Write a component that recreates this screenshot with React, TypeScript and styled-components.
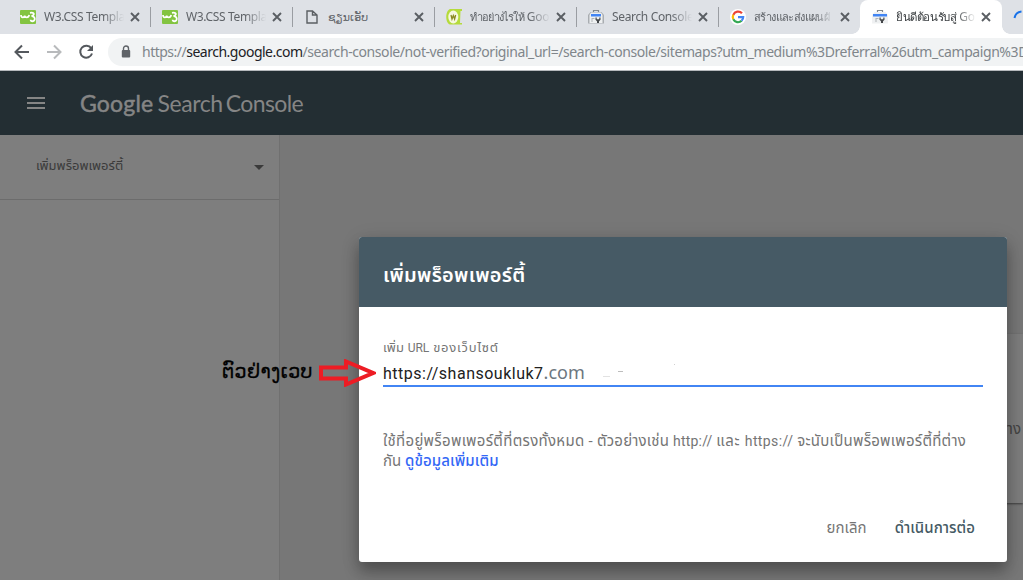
import React from 'react';
import styled, { createGlobalStyle } from 'styled-components';

const Global = createGlobalStyle`
  * { box-sizing: border-box; }
  body { margin: 0; overflow: hidden; font-family: Roboto, "Noto Sans Thai", "Noto Sans", "DejaVu Sans", sans-serif; }
`;

const Page = styled.div`width: 1023px; height: 580px; overflow: hidden; position: relative; background: #777;`;

const TabStrip = styled.div`
  display: flex; height: 34px; background: #dee1e6; overflow: hidden; padding-left: 9px;
`;
const TabBox = styled.div<{ $active?: boolean; $rule?: boolean }>`
  position: relative; flex: none; width: 142px; height: 34px; margin-left: ${p => (p.$active ? -1 : 0)}px;
  display: flex; align-items: center; padding: 0 11px 0 ${p => (p.$active ? 12 : 11)}px;
  background: ${p => (p.$active ? '#fff' : 'transparent')};
  border-radius: ${p => (p.$active ? '8px 8px 0 0' : '0')};
  &::after {
    content: ''; display: ${p => (p.$rule ? 'block' : 'none')};
    position: absolute; right: 0; top: 7px; width: 1px; height: 20px; background: #9a9da2;
  }
`;
const Foot = styled.i<{ $side: 'left' | 'right' }>`
  position: absolute; bottom: 0; ${p => p.$side}: -8px; width: 8px; height: 8px;
  background: radial-gradient(circle at ${p => (p.$side === 'left' ? '0 0' : '100% 0')}, transparent 7.5px, #fff 8px);
`;
const Favicon = styled.span`flex: none; width: 16px; height: 16px; display: flex; align-items: center; justify-content: center;`;
const TabTitle = styled.span<{ $size: number; $ls: number; $dark?: boolean; $cut?: boolean }>`
  width: 80px; flex: none; margin-left: 8px; overflow: hidden; white-space: nowrap; line-height: 22px;
  font-family: "Noto Sans", "Open Sans", "DejaVu Sans", sans-serif;
  font-size: ${p => p.$size}px; letter-spacing: ${p => p.$ls}px; color: ${p => (p.$dark ? '#3c4043' : '#5f6368')};
  mask-image: ${p => (p.$cut ? 'linear-gradient(90deg, #000 74%, transparent 100%)' : 'none')};
`;
const CloseIcon = styled.svg`flex: none; width: 10px; height: 10px; margin-left: auto;`;

const Toolbar = styled.div`
  display: flex; align-items: center; height: 37px; background: #fff; border-bottom: 1px solid #b5b9bc; padding-left: 12px; overflow: hidden;
`;
const NavIcon = styled.svg`flex: none; width: 20px; height: 20px; margin-right: 12px;`;
const Omnibox = styled.div`
  display: flex; align-items: center; flex: none; width: 960px; height: 28px; border-radius: 14px; background: #f1f3f4;
  padding-left: 13px;
`;
const Lock = styled.svg`flex: none; width: 10px; height: 14px;`;
const Url = styled.span`
  margin-left: 11px; white-space: nowrap; font: 14px/22px "Noto Sans", "Open Sans", sans-serif; color: #80868b; letter-spacing: -0.42px;
`;
const Origin = styled.span`
  letter-spacing: -0.5px;
  b { font-weight: 400; color: #202124; }
`;

const AppBar = styled.header`
  display: flex; align-items: center; height: 64px; background: #232e33; padding-left: 27px;
`;
const Brand = styled.div`
  margin-left: 35px; display: flex; font: 23px/30px Lato, sans-serif; color: #858585; white-space: nowrap;
`;
const BrandWord = styled.span<{ $bold?: boolean; $ls: number; $gap?: number }>`
  -webkit-text-stroke: ${p => (p.$bold ? 0.5 : 0)}px #858585; letter-spacing: ${p => p.$ls}px; margin-left: ${p => p.$gap ?? 0}px;
`;

const Body = styled.div`display: flex; height: 445px;`;
const Sidebar = styled.aside`width: 280px; background: #7e7e7e; border-right: 1px solid #707070;`;
const PropertyPicker = styled.div`
  display: flex; justify-content: space-between; align-items: center; height: 65px; border-bottom: 1px solid #6c6c6c; padding: 0 15px 3px 36px;
  color: #3b3b3b;
`;
const Caret = styled.svg`width: 10px; height: 5px; margin-top: 4px;`;
const Main = styled.main`flex: 1; display: flex; justify-content: flex-end; padding-top: 199px; background: #777;`;
const Card = styled.section`
  display: flex; justify-content: flex-end; width: 30px; height: 169px; background: #7d7d7d; box-shadow: 0 1px 2px rgba(0,0,0,.5);
  padding: 85px 2px 0 0; line-height: 20px; color: #444;
`;

const Dialog = styled.section`
  position: absolute; left: 359px; top: 237px; width: 648px; height: 325px; border-radius: 3px; background: #fff;
  display: flex; flex-direction: column;
  box-shadow: 0 10px 15px rgba(0,0,0,.28), 0 3px 20px rgba(0,0,0,.12);
`;
const DialogHead = styled.h2`
  margin: 0; height: 70px; padding: 4px 24px 0; border-radius: 3px 3px 0 0; background: #465a65; color: #fff; line-height: 66px; font-weight: 600;
`;
const DialogBody = styled.div`flex: 1; display: flex; flex-direction: column; padding: 32px 24px 0;`;
const T = styled.span<{ $size?: number; $ls?: number }>`
  font-size: ${p => p.$size ?? 14}px; letter-spacing: ${p => p.$ls ?? 0}px; white-space: pre;
`;
const Label = styled.label`display: flex; align-items: baseline; height: 18px; line-height: 18px; color: #757575;`;
const Field = styled.div`
  position: relative; display: flex; height: 30px; border-bottom: 2px solid #4285f4; line-height: 33px; color: #212121; margin-bottom: 44px;
`;
const Suffix = styled.span`font: 18px/30px "Noto Sans", "Open Sans", sans-serif; color: #6d7780;`;
const Smudges = styled.svg`position: absolute; left: 219px; top: 3px; width: 76px; height: 18px;`;
const Help = styled.p`
  margin: 0; color: #757575;
`;
const HelpLine = styled.span`display: flex; align-items: baseline; height: 20px; line-height: 20px;`;
const MoreLink = styled.a`color: #3367f6; font-weight: 500;`;
const Actions = styled.div`
  display: flex; justify-content: flex-end; gap: 28px; margin-top: 47px; padding-right: 8px; line-height: 20px; color: #757575;
`;
const Confirm = styled.span`color: #455a64; font-weight: 500;`;

const Note = styled.div`
  position: absolute; left: 222px; top: 355px; display: flex; align-items: center; height: 32px; color: #000; font: 19px/30px "DejaVu Sans", sans-serif;
  letter-spacing: .4px; -webkit-text-stroke: .3px #000; white-space: nowrap;
`;
const Arrow = styled.svg`position: absolute; left: 319px; top: 359px; width: 57px; height: 28px;`;

const Close = () => (
  <CloseIcon viewBox="0 0 10 10"><path d="M1 1l8 8M9 1L1 9" stroke="#5a5e63" strokeWidth="1.9" /></CloseIcon>
);
const W3 = () => (
  <svg width="16" height="14" viewBox="0 0 16 14">
    <rect width="16" height="14" rx="1" fill="#83c441" />
    <path d="M1 5c0 3.200 3.500 3 3.700.5C5 8 8.500 8.200 9.200 5" fill="none" stroke="#fff" strokeWidth="1.700" />
    <path d="M10 2.800c4.500-1 5 2 1.600 3.400 4.500.2 3.900 5.600 0 5-.8-.2-1-.8-1-1.400" fill="none" stroke="#fff" strokeWidth="1.800" />
  </svg>
);
const Doc = () => (
  <svg width="12" height="14" viewBox="0 0 12 14"><path d="M1 1h5.500L11 5v8H1zM6.500 1v4H11" fill="none" stroke="#5b5f63" strokeWidth="1.400" /></svg>
);
const Wiki = () => (
  <svg width="16" height="16" viewBox="0 0 16 16">
    <path d="M4 0h12v2h-1.500l-.5 12H16v1.500H4C-1 14-1 2 4 0z" fill="#b5db3b" />
    <ellipse cx="7.300" cy="8" rx="5" ry="6.500" fill="#f6f8de" />
    <path d="M5 6l1 4 1.300-3.500L8.600 10l1-4" fill="none" stroke="#8a8a20" strokeWidth="1.300" />
  </svg>
);
const Toolbox = ({ light }: { light?: boolean }) => (
  <svg width="16" height="16" viewBox="0 0 16 16">
    <path d="M5.500 3V1.500h5V3" fill="none" stroke="#80868b" strokeWidth="1.200" />
    <path d="M2.500 3h11L16 6v8.500H0V6z" fill={light ? '#f0f1f2' : '#a9adb1'} />
    <path d="M3 3.500h10L14.500 6v8h-13V6z" fill="#eef0f1" />
    <rect x={light ? 1 : 3} y="5" width={light ? 14 : 10} height="2.500" fill="#4285f4" />
    <path d="M3.500 9h3v1H4.500v3h-1z" fill="#b0b4b8" />
    <path d="M7.500 8.500v2.300l1.500 1.400V14h2v-1.800l1.500-1.400V8.500h-1.200v1.800H8.700V8.500z" fill="#44474a" />
  </svg>
);
const Google = () => (
  <svg width="16" height="16" viewBox="0 0 16 16">
    <circle cx="8" cy="8" r="8" fill="#fff" />
    <g fill="none" strokeWidth="2.200">
      <path d="M12 4.300A5.200 5.200 0 0 0 3.300 5.800" stroke="#ea4335" />
      <path d="M3.300 5.800a5.200 5.200 0 0 0 0 4.500" stroke="#fbbc05" />
      <path d="M3.300 10.300a5.200 5.200 0 0 0 8.300 1.500" stroke="#34a853" />
      <path d="M11.600 11.800A5 5 0 0 0 13.200 8.100H8" stroke="#4285f4" />
    </g>
  </svg>
);

type TabProps = {
  icon: React.ReactNode; children: React.ReactNode; size?: number; ls?: number; active?: boolean; cut?: boolean; rule?: boolean;
};
const Tab = ({ icon, children, size = 12, ls = -0.25, active, cut, rule = true }: TabProps) => (
  <TabBox $active={active} $rule={rule}>
    {active && <><Foot $side="left" /><Foot $side="right" /></>}
    <Favicon>{icon}</Favicon>
    <TabTitle $size={size} $ls={ls} $dark={active} $cut={cut}>{children}</TabTitle>
    <Close />
  </TabBox>
);

export default function App() {
  return (
    <Page>
      <Global />
      <TabStrip>
        <Tab icon={<W3 />} cut ls={-0.35}>W3.CSS Templa</Tab>
        <Tab icon={<W3 />} cut ls={-0.35}>W3.CSS Templa</Tab>
        <Tab icon={<Doc />} size={11} ls={0}>ຊຽນເອັບ</Tab>
        <Tab icon={<Wiki />} cut size={11} ls={-0.8}>ทำอย่างไรให้<T $size={12} $ls={-0.2}> Goo</T></Tab>
        <Tab icon={<Toolbox />} cut ls={-0.35}>Search Console</Tab>
        <Tab icon={<Google />} cut rule={false} size={11} ls={-0.6}>สร้างและส่งแผนผั</Tab>
        <Tab icon={<Toolbox light />} active cut rule={false} size={11.5} ls={-0.4}>ยินดีต้อนรับสู่<T $size={12} $ls={-0.2}> Go</T></Tab>
        <svg width="20" height="34" viewBox="0 0 20 34"><path d="M12.500 18a8 8 0 0 1 7-6.500" fill="none" stroke="#1a73e8" strokeWidth="2" /></svg>
      </TabStrip>
      <Toolbar>
        <NavIcon viewBox="0 0 20 20"><path d="M17 10H4M10 3.500L3.500 10l6.500 6.500" fill="none" stroke="#54585d" strokeWidth="2" /></NavIcon>
        <NavIcon viewBox="0 0 20 20"><path d="M3 10h13M10 3.500l6.500 6.500-6.500 6.500" fill="none" stroke="#b8babc" strokeWidth="2" /></NavIcon>
        <NavIcon viewBox="0 0 20 20"><path d="M15.200 6.200A6 6 0 1 0 16 11.500" fill="none" stroke="#54585d" strokeWidth="2" /><path d="M17 3v6h-6z" fill="#54585d" /></NavIcon>
        <Omnibox>
          <Lock viewBox="0 0 10 14"><path d="M2.500 6V3.500a2.500 2.500 0 0 1 5 0V6" fill="none" stroke="#5f6368" strokeWidth="1.400" /><rect x="0.800" y="5" width="8.400" height="7.500" rx="1" fill="#5f6368" /></Lock>
          <Url><Origin>https://<b>search.google.com</b></Origin>/search-console/not-verified?original_url=/search-console/sitemaps?utm_medium%3Dreferral%26utm_campaign%3D</Url>
        </Omnibox>
      </Toolbar>
      <AppBar>
        <svg width="18" height="12" viewBox="0 0 18 12"><path d="M0 1h18M0 6h18M0 11h18" stroke="#858585" strokeWidth="2" /></svg>
        <Brand><BrandWord $bold $ls={0.2}>Google</BrandWord><BrandWord $ls={-0.4} $gap={4}>Search</BrandWord><BrandWord $ls={-0.6} $gap={3}>Console</BrandWord></Brand>
      </AppBar>
      <Body>
        <Sidebar>
          <PropertyPicker><T $size={13}>เพิ่มพร็อพเพอร์ตี้</T><Caret viewBox="0 0 10 5"><path d="M0 0h10L5 5z" fill="#3a3a3a" /></Caret></PropertyPicker>
        </Sidebar>
        <Main><Card><T $size={15}>าง</T></Card></Main>
      </Body>
      <Dialog>
        <DialogHead><T $size={20} $ls={0.3}>เพิ่มพร็อพเพอร์ตี้</T></DialogHead>
        <DialogBody>
          <Label><T $size={13} $ls={0.2}>เพิ่ม </T><T $size={12}>URL</T><T $size={13} $ls={0.75}> ของเว็บไซต์</T></Label>
          <Field>
            <T $size={16} $ls={0.5}>https://shansoukluk7</T><Suffix>.com</Suffix>
            <Smudges viewBox="0 0 76 18"><path d="M1 16.500h7" stroke="#e2e2e2" /><path d="M16 11.500h5" stroke="#bdbdbd" /><path d="M72 4.500h1" stroke="#d0d0d0" /></Smudges>
          </Field>
          <Help>
            <HelpLine>
              <T $size={15} $ls={0.31}>ใช้ที่อยู่พร็อพเพอร์ตี้ที่ตรงทั้งหมด - </T><T $size={15} $ls={0.2}>ตัวอย่างเช่น </T><T $ls={0.2}>http:// </T>
              <T $size={15} $ls={0.7}>และ </T><T $ls={0.4}>https:// </T><T $size={15} $ls={0.27}>จะนับเป็นพร็อพเพอร์ตี้ที่ต่าง</T>
            </HelpLine>
            <HelpLine><T $size={15}>กัน </T><MoreLink><T $size={15} $ls={0.15}>ดูข้อมูลเพิ่มเติม</T></MoreLink></HelpLine>
          </Help>
          <Actions><T $size={15} $ls={0.1}>ยกเลิก</T><Confirm><T $size={15} $ls={0.05}>ดำเนินการต่อ</T></Confirm></Actions>
        </DialogBody>
      </Dialog>
      <Note>ຕົວຢ່າງເວບ</Note>
      <Arrow viewBox="0 0 57 28"><path d="M2 8.500h25v-6L54 14 27 25.500v-6H2z" fill="none" stroke="#ed1c24" strokeWidth="4" /></Arrow>
    </Page>
  );
}
